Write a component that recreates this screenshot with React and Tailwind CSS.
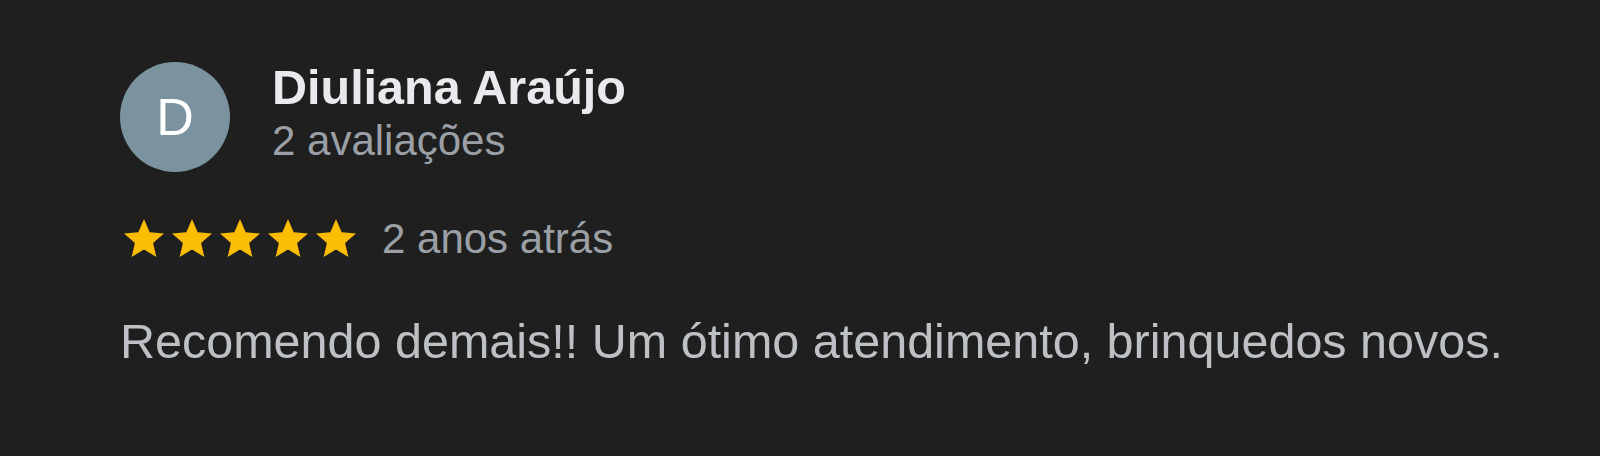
export default function App() {
  const Star = () => (
    <svg viewBox="0 0 24 24" className="w-[48px] h-[48px]" fill="#fbbc04">
      <path d="M12 17.27L18.18 21l-1.64-7.03L22 9.24l-7.19-.61L12 2 9.19 8.63 2 9.24l5.46 4.73L5.82 21z" />
    </svg>
  );
  return (
    <div className="w-[1600px] h-[456px] bg-[#1f1f1f] pl-[120px] pt-[62px]" style={{ fontFamily: '"Liberation Sans", Arial, sans-serif' }}>
      <div className="flex items-start gap-[42px]">
        <div className="w-[110px] h-[110px] rounded-full bg-[#7b939f] flex items-center justify-center text-white text-[52px] leading-none">
          D
        </div>
        <div className="flex flex-col -mt-[3px]">
          <div className="text-[48.5px] leading-[56px] font-bold text-[#e8eaed]">Diuliana Araújo</div>
          <div className="text-[42px] leading-[48px] text-[#9aa0a6] mt-[2px]">2 avaliações</div>
        </div>
      </div>
      <div className="flex items-center mt-[43px]">
        <div className="flex">
          <Star /><Star /><Star /><Star /><Star />
        </div>
        <div className="ml-[22px] text-[42px] leading-[48px] text-[#9aa0a6]">2 anos atrás</div>
      </div>
      <div className="mt-[50px] text-[48.5px] leading-[56px] text-[#bdc1c6]">
        Recomendo demais!! Um ótimo atendimento, brinquedos novos.
      </div>
    </div>
  );
}
